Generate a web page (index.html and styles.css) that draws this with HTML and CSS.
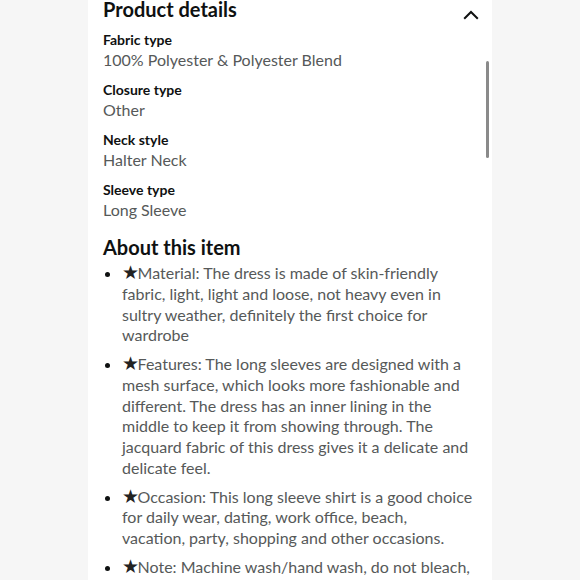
FILE: index.html
```html
<!DOCTYPE html>
<html>
<head>
<meta charset="utf-8">
<link rel="stylesheet" href="styles.css">
</head>
<body>
<div class="page">
  <div class="panel">
    <div class="scrollbar"></div>
    <div class="head-row">
      <h2 class="heading">Product details</h2>
      <svg class="chevron" width="16" height="10" viewBox="0 0 16 10"><path d="M1.2 8.8 L8 2 L14.8 8.8" fill="none" stroke="#0f1111" stroke-width="2"/></svg>
    </div>
    <dl class="attrs">
      <div class="attr"><dt>Fabric type</dt><dd>100% Polyester &amp; Polyester Blend</dd></div>
      <div class="attr"><dt>Closure type</dt><dd>Other</dd></div>
      <div class="attr"><dt>Neck style</dt><dd>Halter Neck</dd></div>
      <div class="attr"><dt>Sleeve type</dt><dd>Long Sleeve</dd></div>
    </dl>
    <h2 class="heading about">About this item</h2>
    <ul class="bullets">
      <li><span class="star">★</span>Material: The dress is made of skin-friendly fabric, light, light and loose, not heavy even in sultry weather, definitely the first choice for wardrobe</li>
      <li><span class="star">★</span>Features: The long sleeves are designed with a mesh surface, which looks more fashionable and different. The dress has an inner lining in the middle to keep it from showing through. The jacquard fabric of this dress gives it a delicate and delicate feel.</li>
      <li><span class="star">★</span>Occasion: This long sleeve shirt is a good choice for daily wear, dating, work office, beach, vacation, party, shopping and other occasions.</li>
      <li><span class="star">★</span>Note: Machine wash/hand wash, do not bleach, hang to dry, do not iron at high temperature.</li>
    </ul>
  </div>
</div>
</body>
</html>
```
FILE: styles.css
```css
html, body {
  margin: 0;
  padding: 0;
  background: #f6f6f6;
  font-family: Lato, "Noto Sans", sans-serif;
}
.page {
  height: 580px;
  overflow: hidden;
}
.panel {
  position: relative;
  margin-left: 88px;
  width: 404px;
  height: 580px;
  background: #ffffff;
  box-sizing: border-box;
  padding: 0 18.5px 0 15px;
  overflow: hidden;
}
.scrollbar {
  position: absolute;
  left: 398px;
  top: 61px;
  width: 3px;
  height: 97px;
  border-radius: 2px;
  background: #8a8a8a;
}
.head-row {
  display: flex;
  justify-content: space-between;
  align-items: flex-start;
  margin-top: -4px;
  margin-right: -5.5px;
}
.heading {
  margin: 0;
  font-size: 20px;
  line-height: 26px;
  font-weight: 700;
  color: #0f1111;
}
.chevron {
  margin-top: 14px;
}
.attrs {
  margin: 8px 0 0;
  display: flex;
  flex-direction: column;
  gap: 10px;
}
.attr dt {
  font-size: 14px;
  line-height: 19px;
  font-weight: 700;
  color: #0f1111;
}
.attr dd {
  margin: 0;
  font-size: 16px;
  line-height: 21px;
  color: #565959;
}
.about {
  margin-top: 14px;
}
.bullets {
  margin: 3px 0 0;
  padding-left: 19px;
  color: #565959;
  font-size: 16px;
  line-height: 20.75px;
}
.bullets li {
  margin-bottom: 8px;
}
.bullets li::marker {
  color: #0f1111;
}
.star {
  font-family: "DejaVu Sans", sans-serif;
  font-size: 19px;
  line-height: 0;
  margin-right: -1.5px;
  color: #222222;
}
```
